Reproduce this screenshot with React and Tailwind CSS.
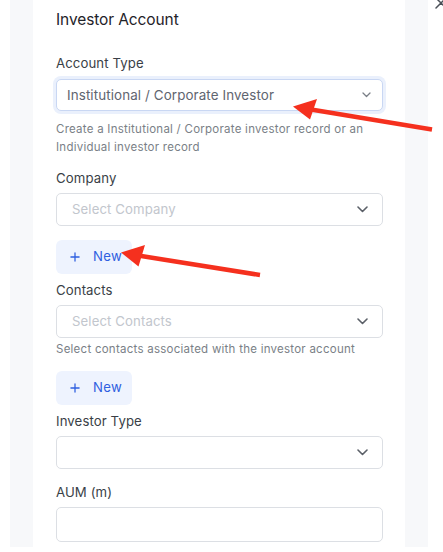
import { Plus } from 'lucide-react'

const font = { fontFamily: 'Inter, "Noto Sans", sans-serif' }

function Chevron({ small }) {
  if (small) {
    return (
      <svg width="9" height="6" viewBox="0 0 9 6" className="text-[#7a7f87]">
        <path d="M1 1l3.5 3.5L8 1" fill="none" stroke="currentColor" strokeWidth="1.3" strokeLinecap="round" strokeLinejoin="round" />
      </svg>
    )
  }
  return (
    <svg width="11" height="7" viewBox="0 0 11 7" className="text-[#5b6068]">
      <path d="M1 1l4.5 4.5L10 1" fill="none" stroke="currentColor" strokeWidth="1.6" strokeLinecap="round" strokeLinejoin="round" />
    </svg>
  )
}

function Label({ children, className = '' }) {
  return <p className={`text-[13.2px] leading-[20px] tracking-[0.1px] text-[#3a3f47] ${className}`}>{children}</p>
}

function Select({ placeholder, className = '' }) {
  return (
    <div className={`h-[33px] rounded-[5px] border border-[#dcdfe4] bg-white flex items-center justify-between pl-[15px] pr-[14px] ${className}`}>
      <span className="text-[13.2px] tracking-[0.1px] text-[#c2c6cd]">{placeholder}</span>
      <Chevron />
    </div>
  )
}

function NewButton({ className = '' }) {
  return (
    <button className={`w-[76px] h-[34px] rounded-[6px] bg-[#eef3fe] flex items-center pl-[12px] gap-[11px] text-[#2f60e0] ${className}`}>
      <Plus size={14} strokeWidth={2.2} />
      <span className="text-[13.2px] tracking-[0.3px]">New</span>
    </button>
  )
}

function Help({ children, className = '' }) {
  return <p className={`text-[11.5px] leading-[18px] tracking-[0.25px] text-[#7a7f87] ${className}`}>{children}</p>
}

export default function App() {
  return (
    <div className="relative w-[443px] h-[552px] bg-white overflow-hidden" style={font}>
      <div className="ml-[10px] w-[418px] h-[547px] bg-[#f7f8fa] px-[23px]">
        <div className="h-full bg-white pl-[23px] pr-[22px] pt-[6px] overflow-hidden">
          <h2 className="text-[15.5px] leading-[28px] tracking-[-0.1px] text-[#1f2329]">Investor Account</h2>

          <Label className="mt-[19px]">Account Type</Label>
          <div className="mt-[6px] h-[32px] rounded-[5px] border border-[#c9d7f3] bg-white shadow-[0_0_0_3px_#eaf0fc] flex items-center justify-between pl-[10px] pr-[11px]">
            <span className="text-[13.4px] tracking-[0.1px] text-[#5f6570]">Institutional / Corporate Investor</span>
            <Chevron small />
          </div>
          <Help className="mt-[9px]">
            Create a Institutional / Corporate investor record or an Individual investor record
          </Help>

          <Label className="mt-[12px]">Company</Label>
          <Select placeholder="Select Company" className="mt-[5px]" />
          <NewButton className="mt-[14px]" />

          <Label className="mt-[6px]">Contacts</Label>
          <Select placeholder="Select Contacts" className="mt-[5px]" />
          <Help className="mt-[2px]">Select contacts associated with the investor account</Help>
          <NewButton className="mt-[13px]" />

          <Label className="mt-[6px]">Investor Type</Label>
          <Select placeholder="" className="mt-[5px]" />

          <Label className="mt-[13px]">AUM (m)</Label>
          <div className="mt-[5px] h-[35px] rounded-[5px] border border-[#dcdfe4] bg-white" />
        </div>
      </div>

      {/* close icon, mostly off-screen */}
      <svg className="absolute left-[434px] top-[-4px]" width="14" height="14" viewBox="0 0 14 14">
        <path d="M2 2l10 10M12 2L2 12" stroke="#4b5058" strokeWidth="1.5" strokeLinecap="round" />
      </svg>

      {/* annotation arrows */}
      <svg className="absolute left-0 top-0 pointer-events-none" width="443" height="552" viewBox="0 0 443 552">
        <line x1="432" y1="129.5" x2="308" y2="109" stroke="#f5301e" strokeWidth="4.5" />
        <polygon points="293,106.5 317,99 310,119.5" fill="#f5301e" />
        <line x1="260" y1="275" x2="135" y2="255" stroke="#f5301e" strokeWidth="4.5" />
        <polygon points="121,252.5 145,245 138.5,266.5" fill="#f5301e" />
      </svg>
    </div>
  )
}
